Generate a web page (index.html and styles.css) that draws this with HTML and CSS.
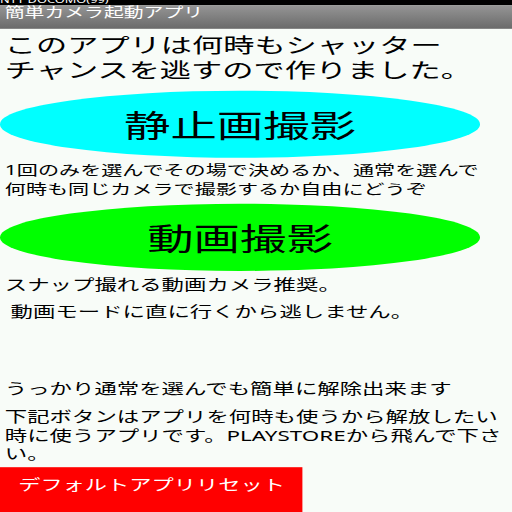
FILE: index.html
```html
<!DOCTYPE html>
<html lang="ja">
<head>
<meta charset="utf-8">
<title>簡単カメラ起動アプリ</title>
<link rel="stylesheet" href="styles.css">
</head>
<body>
<div class="device">
  <div class="status"><span class="status-text">NTT DOCOMO(99)</span></div>
  <div class="titlebar">簡単カメラ起動アプリ</div>
  <div class="content">
    <p class="lead">このアプリは何時もシャッター<br>チャンスを逃すので作りました。</p>
    <div class="oval oval-cyan">静止画撮影</div>
    <p class="note note-small">1回のみを選んでその場で決めるか、通常を選んで<br>何時も同じカメラで撮影するか自由にどうぞ</p>
    <div class="oval oval-green">動画撮影</div>
    <p class="note note-snap">スナップ撮れる動画カメラ推奨。</p>
    <p class="note note-mode">&nbsp;動画モードに直に行くから逃しません。</p>
    <p class="note note-oops">うっかり通常を選んでも簡単に解除出来ます</p>
    <p class="note note-below">下記ボタンはアプリを何時も使うから解放したい<br>時に使うアプリです。PLAYSTOREから飛んで下さ<br>い。</p>
    <div class="reset">デフォルトアプリリセット</div>
  </div>
</div>
</body>
</html>
```
FILE: styles.css
```css
html, body {
  margin: 0;
  padding: 0;
  width: 512px;
  height: 512px;
  overflow: hidden;
  background: #f8fcf8;
}

.device {
  width: 320px;
  height: 480px;
  overflow: hidden;
  transform: scale(1.6, 1.0666667);
  transform-origin: 0 0;
  background: #f8fcf8;
  font-family: "Noto Sans", "Noto Sans CJK JP", sans-serif;
  color: #000;
}

.status {
  height: 5.4px;
  overflow: hidden;
  background: #000;
}

.status-text {
  display: block;
  margin-top: -3.8px;
  font-size: 8px;
  line-height: 8px;
  color: #fff;
  white-space: nowrap;
}

.titlebar {
  height: 21.8px;
  box-sizing: border-box;
  padding: 0 3px;
  background: linear-gradient(#959595, #6a6a6a);
  color: #fff;
  font-size: 12.4px;
  line-height: 13px;
  white-space: nowrap;
}

.content {
  display: flex;
  flex-direction: column;
  align-items: flex-start;
}

.lead {
  margin: 3.6px 0 0;
  padding-left: 3px;
  font-size: 19.5px;
  line-height: 23.4px;
  white-space: nowrap;
}

.oval {
  width: 300px;
  height: 62.8px;
  border-radius: 50%;
  display: flex;
  align-items: center;
  justify-content: center;
  font-size: 29px;
  line-height: 1;
}

.oval-cyan {
  margin-top: 7.7px;
  background: #00ffff;
}

.oval-green {
  margin-top: 4.8px;
  background: #00ff00;
}

.note {
  margin: 0;
  padding-left: 3px;
  font-size: 14px;
  line-height: 17.3px;
  white-space: nowrap;
}

.note-small {
  margin-top: 3.3px;
  font-size: 13.2px;
}

.note-snap {
  margin-top: 4.2px;
}

.note-mode {
  margin-top: 8px;
}

.note-oops {
  margin-top: 54.9px;
}

.note-below {
  margin-top: 9px;
}

.reset {
  margin-top: 4.3px;
  width: 189.4px;
  height: 45px;
  box-sizing: border-box;
  padding-top: 7.5px;
  background: #ff0000;
  color: #fff;
  font-size: 13.9px;
  line-height: 17.3px;
  text-align: center;
  white-space: nowrap;
}
```
